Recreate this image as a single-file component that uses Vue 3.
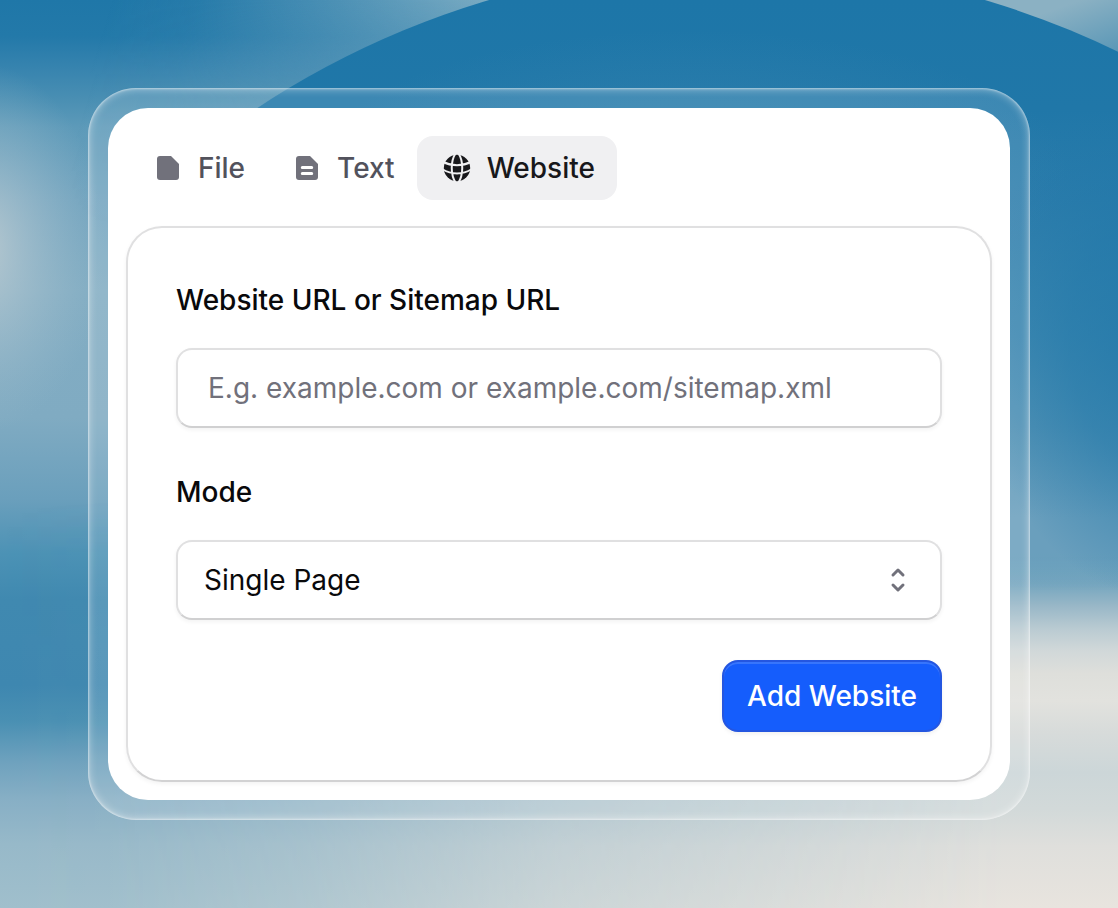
<script setup>
import { ref } from 'vue'

const tabs = [
  { id: 'file', label: 'File' },
  { id: 'text', label: 'Text' },
  { id: 'website', label: 'Website' },
]
const active = ref('website')
const url = ref('')
const mode = ref('single')
</script>

<template>
  <main class="scene">
    <svg class="backdrop" viewBox="0 0 1118 908" preserveAspectRatio="none" aria-hidden="true">
      <defs>
        <linearGradient id="west" x1="0" y1="0" x2="0" y2="1">
          <stop offset="0" stop-color="#1f77a8" />
          <stop offset="0.04" stop-color="#2379a9" />
          <stop offset="0.07" stop-color="#3482ae" />
          <stop offset="0.11" stop-color="#4a8fb3" />
          <stop offset="0.14" stop-color="#5d9ab9" />
          <stop offset="0.22" stop-color="#72a4bf" />
          <stop offset="0.32" stop-color="#82adc3" />
          <stop offset="0.46" stop-color="#80abc2" />
          <stop offset="0.55" stop-color="#6a9fbc" />
          <stop offset="0.61" stop-color="#4c92b5" />
          <stop offset="0.66" stop-color="#4089b0" />
          <stop offset="0.755" stop-color="#3e87b0" />
          <stop offset="0.795" stop-color="#4a90b3" />
          <stop offset="0.84" stop-color="#6fa2be" />
          <stop offset="0.88" stop-color="#87afc5" />
          <stop offset="0.93" stop-color="#97b9c9" />
          <stop offset="1" stop-color="#a0bfcc" />
        </linearGradient>
        <linearGradient id="east" x1="0" y1="0" x2="0" y2="1">
          <stop offset="0.55" stop-color="#659cbb" stop-opacity="0" />
          <stop offset="0.61" stop-color="#5f9ab9" />
          <stop offset="0.643" stop-color="#75a6bf" />
          <stop offset="0.667" stop-color="#98b7c7" />
          <stop offset="0.693" stop-color="#bacbd2" />
          <stop offset="0.717" stop-color="#d1d8d9" />
          <stop offset="0.742" stop-color="#dedfdb" />
          <stop offset="0.772" stop-color="#e2e2de" />
          <stop offset="0.807" stop-color="#d7dbda" />
          <stop offset="0.851" stop-color="#ccd6d8" />
          <stop offset="0.891" stop-color="#d2d9d9" />
          <stop offset="0.932" stop-color="#dfdfdc" />
          <stop offset="1" stop-color="#e8e4de" />
        </linearGradient>
        <linearGradient id="ramp" x1="0" y1="0" x2="1" y2="0">
          <stop offset="0" stop-color="#fff" stop-opacity="0" />
          <stop offset="0.1" stop-color="#fff" stop-opacity="0.03" />
          <stop offset="0.27" stop-color="#fff" stop-opacity="0.22" />
          <stop offset="0.5" stop-color="#fff" stop-opacity="0.6" />
          <stop offset="0.9" stop-color="#fff" />
        </linearGradient>
        <linearGradient id="sheen" gradientUnits="userSpaceOnUse" x1="110" y1="0" x2="500" y2="120">
          <stop offset="0" stop-color="#9fc0cd" stop-opacity="0" />
          <stop offset="0.2" stop-color="#9fc0cd" stop-opacity="0.06" />
          <stop offset="0.5" stop-color="#9fc0cd" stop-opacity="0.33" />
          <stop offset="0.9" stop-color="#9fc0cd" stop-opacity="0.72" />
        </linearGradient>
        <linearGradient id="sheenFade" x1="0" y1="0" x2="0" y2="1">
          <stop offset="0" stop-color="#fff" />
          <stop offset="0.4" stop-color="#fff" stop-opacity="0.35" />
          <stop offset="1" stop-color="#fff" stop-opacity="0" />
        </linearGradient>
        <linearGradient id="corner" gradientUnits="userSpaceOnUse" x1="1095" y1="-5" x2="1118" y2="60">
          <stop offset="0" stop-color="#8bb1c3" />
          <stop offset="1" stop-color="#5494b5" />
        </linearGradient>
        <linearGradient id="dome" gradientUnits="userSpaceOnUse" x1="0" y1="0" x2="0" y2="908">
          <stop offset="0" stop-color="#1d76a8" />
          <stop offset="0.12" stop-color="#2077a8" />
          <stop offset="0.22" stop-color="#2b7cab" />
          <stop offset="0.37" stop-color="#4089b1" />
          <stop offset="0.47" stop-color="#5292b5" />
          <stop offset="0.57" stop-color="#6a9fbd" />
          <stop offset="0.61" stop-color="#6a9fbd" />
          <stop offset="0.65" stop-color="#75a6bf" stop-opacity="0" />
        </linearGradient>
        <linearGradient id="domeFade" gradientUnits="userSpaceOnUse" x1="120" y1="0" x2="300" y2="0">
          <stop offset="0" stop-color="#fff" stop-opacity="0" />
          <stop offset="0.8" stop-color="#fff" />
        </linearGradient>
        <radialGradient id="glow">
          <stop offset="0" stop-color="#c4cfd3" stop-opacity="0.85" />
          <stop offset="0.4" stop-color="#b6c8d1" stop-opacity="0.5" />
          <stop offset="1" stop-color="#9fbccb" stop-opacity="0" />
        </radialGradient>
        <radialGradient id="deep">
          <stop offset="0" stop-color="#1f77a9" stop-opacity="0.8" />
          <stop offset="0.5" stop-color="#1f77a9" stop-opacity="0.55" />
          <stop offset="1" stop-color="#1f77a9" stop-opacity="0" />
        </radialGradient>
        <radialGradient id="haze">
          <stop offset="0" stop-color="#5b97ba" stop-opacity="0.3" />
          <stop offset="1" stop-color="#5b97ba" stop-opacity="0" />
        </radialGradient>
        <mask id="rampMask"><rect width="1118" height="908" fill="url(#ramp)" /></mask>
        <mask id="sheenMask"><rect width="1118" height="240" fill="url(#sheenFade)" /></mask>
        <mask id="domeMask"><rect width="1118" height="908" fill="url(#domeFade)" /></mask>
      </defs>
      <rect width="1118" height="908" fill="url(#west)" />
      <ellipse cx="-20" cy="248" rx="125" ry="185" fill="url(#glow)" />
      <g mask="url(#sheenMask)"><rect width="800" height="240" fill="url(#sheen)" /></g>
      <rect x="900" width="218" height="300" fill="url(#corner)" />
      <g mask="url(#rampMask)"><rect width="1118" height="908" fill="url(#east)" /></g>
      <g mask="url(#domeMask)"><circle cx="737" cy="835" r="871" fill="url(#dome)" /></g>
      <ellipse cx="690" cy="170" rx="380" ry="140" fill="url(#haze)" />
      <ellipse cx="1165" cy="340" rx="190" ry="260" fill="url(#deep)" />
    </svg>

    <div class="frame">
      <section class="panel">
        <nav class="tabs" role="tablist" aria-label="Source type">
          <button
            v-for="tab in tabs"
            :key="tab.id"
            type="button"
            role="tab"
            class="tab"
            :class="{ active: active === tab.id }"
            :aria-selected="active === tab.id"
            @click="active = tab.id"
          >
            <svg v-if="tab.id === 'file'" class="icon" viewBox="0 0 32 32" aria-hidden="true">
              <path d="M8 4h11l8 8v13a3 3 0 0 1-3 3H8a3 3 0 0 1-3-3V7a3 3 0 0 1 3-3Z" />
            </svg>
            <svg v-else-if="tab.id === 'text'" class="icon" viewBox="0 0 32 32" aria-hidden="true">
              <path d="M8 4h11l8 8v13a3 3 0 0 1-3 3H8a3 3 0 0 1-3-3V7a3 3 0 0 1 3-3Z" />
              <path class="lines" d="M11.3 15.5h9.4M11.3 21.5h9.4" />
            </svg>
            <svg v-else class="icon" viewBox="0 0 32 32" aria-hidden="true">
              <circle cx="16" cy="16" r="13.2" />
              <path
                class="grid-lines"
                d="M1 9.5Q16 17 31 9.5M1 17Q16 26 31 17M14.8 1C9.4 9 9.4 23 14.8 31M17.2 1C22.6 9 22.6 23 17.2 31"
              />
            </svg>
            <span>{{ tab.label }}</span>
          </button>
        </nav>

        <form class="form" @submit.prevent>
          <div class="field">
            <label for="url">Website URL or Sitemap URL</label>
            <input
              id="url"
              v-model="url"
              class="control"
              type="text"
              placeholder="E.g. example.com or example.com/sitemap.xml"
            />
          </div>
          <div class="field">
            <label for="mode">Mode</label>
            <div class="select-wrap">
              <select id="mode" v-model="mode" class="control select">
                <option value="single">Single Page</option>
                <option value="sitemap">Sitemap</option>
              </select>
              <svg class="chevrons" viewBox="0 0 32 32" aria-hidden="true">
                <path d="m11 11 5-5 5 5M11 21l5 5 5-5" />
              </svg>
            </div>
          </div>
          <button class="submit" type="submit">Add Website</button>
        </form>
      </section>
    </div>
  </main>
</template>

<style>
body {
  background: #3e87b0;
}
</style>

<style scoped>
.scene,
.scene * {
  box-sizing: border-box;
}
.scene {
  position: relative;
  display: flex;
  align-items: center;
  min-height: 100vh;
  padding: 88px;
  overflow: hidden;
  font-family: Inter, "Liberation Sans", sans-serif;
  font-size: 28px;
  color: #09090b;
}
.backdrop {
  position: absolute;
  inset: 0;
  width: 100%;
  height: 100%;
}
.frame {
  position: relative;
  flex: 1;
  padding: 20px;
  border-radius: 48px;
  background: rgba(255, 255, 255, 0.13);
  box-shadow:
    inset 0 0 2px 1px rgba(255, 255, 255, 0.4),
    inset 0 0 8px 1px rgba(255, 255, 255, 0.45);
}
.panel {
  padding: 28px 18px 18px;
  border-radius: 40px;
  background: #fff;
}
.tabs {
  display: flex;
  margin: 0 2px 26px;
}
.tab {
  display: flex;
  align-items: center;
  gap: 14px;
  height: 64px;
  padding: 0 22px 0 24px;
  border: 0;
  border-radius: 16px;
  background: transparent;
  color: #52525c;
  font: inherit;
  font-weight: 500;
  cursor: pointer;
}
.tab.active {
  background: #f0f0f2;
  color: #18181b;
}
.icon {
  flex: none;
  width: 32px;
  height: 32px;
  fill: #71717b;
}
.active .icon {
  fill: #18181b;
}
.icon .lines {
  fill: none;
  stroke: #fff;
  stroke-width: 3;
  stroke-linecap: round;
}
.icon .grid-lines {
  fill: none;
  stroke: #f0f0f2;
  stroke-width: 2;
}
.form {
  display: flex;
  flex-direction: column;
  gap: 40px;
  padding: 48px;
  border: 2px solid #e0e0e1;
  border-bottom-color: #d2d2d3;
  border-radius: 36px;
  box-shadow: 0 2px 4px rgba(0, 0, 0, 0.05);
}
.field {
  display: flex;
  flex-direction: column;
  gap: 24px;
}
label {
  line-height: 48px;
  font-weight: 500;
}
.control {
  width: 100%;
  height: 80px;
  padding: 0 30px;
  border: 2px solid #e0e0e1;
  border-bottom-color: #d0d0d1;
  border-radius: 16px;
  background: #fff;
  box-shadow: 0 2px 4px rgba(0, 0, 0, 0.05);
  color: #09090b;
  font: inherit;
}
.control::placeholder {
  color: #71717b;
  opacity: 1;
}
.select-wrap {
  position: relative;
}
.select {
  display: block;
  padding: 0 26px;
  appearance: none;
}
.chevrons {
  position: absolute;
  top: 24px;
  right: 28px;
  width: 32px;
  height: 32px;
  fill: none;
  stroke: #71717b;
  stroke-width: 3;
  stroke-linecap: round;
  stroke-linejoin: round;
  pointer-events: none;
}
.submit {
  align-self: flex-end;
  height: 72px;
  padding: 0 23px;
  border: 2px solid #2456e0;
  border-radius: 16px;
  background: #155dfc;
  box-shadow:
    inset 0 2px 0 rgba(255, 255, 255, 0.15),
    0 2px 4px rgba(0, 0, 0, 0.06);
  color: #fff;
  font: inherit;
  font-weight: 500;
  cursor: pointer;
}
</style>
